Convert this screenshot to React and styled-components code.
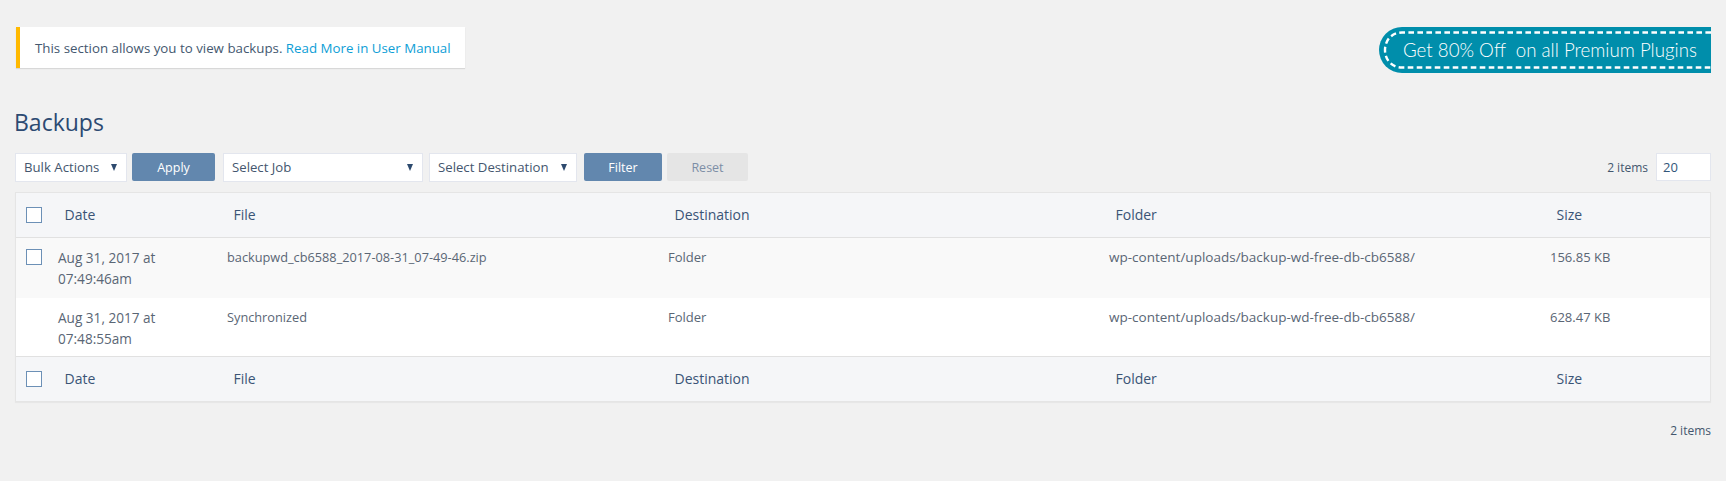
import React from "react";
import styled, { createGlobalStyle } from "styled-components";

const GlobalStyle = createGlobalStyle`
  html, body {
    margin: 0;
    background: #f1f1f1;
    font-family: "Open Sans", "Liberation Sans", sans-serif;
    font-size: 13px;
    color: #32496b;
  }
`;

const Page = styled.div`
  padding: 27px 15px 0;
  box-sizing: border-box;
  height: 481px;
  overflow: hidden;
`;

const TopRow = styled.div`
  display: flex;
  justify-content: space-between;
  align-items: flex-start;
`;

const Notice = styled.div`
  margin-left: 1px;
  box-sizing: border-box;
  width: 449px;
  height: 41px;
  padding: 0 0 0 15px;
  display: flex;
  align-items: center;
  white-space: pre;
  background: #fff;
  border-left: 4px solid #ffb900;
  box-shadow: 0 1px 1px rgba(0, 0, 0, 0.1);
  color: #44586f;
  font-size: 13.3px;
`;

const NoticeLink = styled.a`
  color: #0d9ed6;
  text-decoration: none;
`;

const Banner = styled.div`
  position: relative;
  box-sizing: border-box;
  width: 332px;
  height: 46px;
  padding-left: 24px;
  display: flex;
  align-items: center;
  background: #008eab;
  border-radius: 23px 0 0 23px;
  color: #fff;
  font-family: Lato, sans-serif;
  font-weight: 300;
  font-size: 18.7px;
  white-space: pre;
`;

const BannerDashes = styled.svg`
  position: absolute;
  left: 0;
  top: 0;
`;

const Title = styled.h1`
  margin: 33px 0 0 -1px;
  font-size: 23px;
  font-weight: 400;
  line-height: 32px;
  color: #2c4a72;
`;

const Toolbar = styled.div`
  margin-top: 14px;
  height: 30px;
  display: flex;
  align-items: center;
  justify-content: space-between;
`;

const Group = styled.div`
  display: flex;
  align-items: center;
`;

const SelectBox = styled.div`
  position: relative;
  box-sizing: border-box;
  width: ${(p) => p.$width}px;
  margin-right: ${(p) => p.$gap}px;
  height: 29px;
  &::after {
    content: "";
    position: absolute;
    right: 10px;
    top: 11px;
    border-left: 3.5px solid transparent;
    border-right: 3.5px solid transparent;
    border-top: 7px solid #2d4a6e;
  }
`;

const Select = styled.select`
  appearance: none;
  box-sizing: border-box;
  width: 100%;
  height: 100%;
  padding: 0 0 0 8px;
  background: #fff;
  border: 1px solid #e3e6ee;
  border-radius: 0;
  font-family: inherit;
  font-size: 13.2px;
  color: #44566e;
`;

const Button = styled.button`
  box-sizing: border-box;
  width: ${(p) => p.$width}px;
  margin-right: ${(p) => p.$gap}px;
  height: 28px;
  border: 0;
  border-radius: 2px;
  background: ${(p) => (p.$muted ? "#e5e5e5" : "#6287ae")};
  color: ${(p) => (p.$muted ? "#7d8ea6" : "#fff")};
  font-family: inherit;
  font-size: 12.5px;
  font-weight: 400;
`;

const ItemCount = styled.span`
  font-size: 12px;
  color: #44566e;
`;

const PerPage = styled.input`
  box-sizing: border-box;
  width: 55px;
  height: 28px;
  margin-left: 8px;
  padding: 0 0 0 6px;
  background: #fff;
  border: 1px solid #e3e6ee;
  font-family: inherit;
  font-size: 13px;
  color: #32567a;
`;

const Table = styled.table`
  margin-top: 9.5px;
  width: 100%;
  table-layout: fixed;
  border-collapse: separate;
  border-spacing: 0;
  border: 1px solid #e5e5e5;
  box-shadow: 0 1px 1px rgba(0, 0, 0, 0.04);
  background: #fff;
`;

const HeadCell = styled.th`
  height: 44px;
  padding: 0 0 0 ${(p) => (p.$check ? 10 : 14.5)}px;
  background: #f5f6f8;
  font-size: 14px;
  font-weight: 400;
  text-align: left;
  color: #3a5476;
  border-bottom: ${(p) => (p.$top ? "1px solid #e1e1e1" : "0")};
  border-top: ${(p) => (p.$top ? "0" : "1px solid #e1e1e1")};
`;

const Row = styled.tr`
  height: ${(p) => (p.$alt ? 60 : 58)}px;
  background: ${(p) => (p.$alt ? "#f9f9f9" : "#fff")};
`;

const Cell = styled.td`
  padding: 9px 8px 0;
  vertical-align: top;
  font-size: ${(p) => p.$size || 13}px;
  line-height: 21px;
  color: #5a6675;
`;

const CheckCell = styled.td`
  padding: 11px 0 0 10px;
  vertical-align: top;
`;

const CheckBox = styled.span`
  display: block;
  box-sizing: border-box;
  width: 16px;
  height: 16px;
  background: #fff;
  border: 1px solid #6c90b6;
`;

const BottomCount = styled.div`
  margin-top: 20px;
  text-align: right;
  font-size: 12px;
  color: #44566e;
`;

const columns = ["Date", "File", "Destination", "Folder", "Size"];
const widths = [34, 169, 441, 441, 441, 168];

const backups = [
  {
    date: "Aug 31, 2017 at",
    time: "07:49:46am",
    file: "backupwd_cb6588_2017-08-31_07-49-46.zip",
    size: "156.85 KB",
    selectable: true,
  },
  {
    date: "Aug 31, 2017 at",
    time: "07:48:55am",
    file: "Synchronized",
    size: "628.47 KB",
  },
];

const HeaderCells = ({ top }) => (
  <tr>
    <HeadCell $check $top={top}>
      <CheckBox />
    </HeadCell>
    {columns.map((name) => (
      <HeadCell key={name} $top={top}>
        {name}
      </HeadCell>
    ))}
  </tr>
);

const App = () => {
  return (
    <Page>
      <GlobalStyle />
      <TopRow>
        <Notice>
          This section allows you to view backups.{" "}
          <NoticeLink href="#">Read More in User Manual</NoticeLink>
        </Notice>
        <Banner>
          <BannerDashes width="332" height="46" viewBox="0 0 332 46" fill="none">
            <path
              d="M332 5.5H23C13 5.5 6 13 6 23s7 17.5 17 17.5H332"
              stroke="#fff"
              strokeWidth="2.4"
              strokeDasharray="5.6 3.4"
            />
          </BannerDashes>
          Get 80% Off  on all Premium Plugins
        </Banner>
      </TopRow>
      <Title>Backups</Title>
      <Toolbar>
        <Group>
          <SelectBox $width={112} $gap={5}>
            <Select defaultValue="bulk">
              <option value="bulk">Bulk Actions</option>
            </Select>
          </SelectBox>
          <Button $width={83} $gap={8}>
            Apply
          </Button>
          <SelectBox $width={200} $gap={6}>
            <Select defaultValue="job">
              <option value="job">Select Job</option>
            </Select>
          </SelectBox>
          <SelectBox $width={148} $gap={7}>
            <Select defaultValue="destination">
              <option value="destination">Select Destination</option>
            </Select>
          </SelectBox>
          <Button $width={78} $gap={5}>
            Filter
          </Button>
          <Button $width={81} $gap={0} $muted>
            Reset
          </Button>
        </Group>
        <Group>
          <ItemCount>2 items</ItemCount>
          <PerPage defaultValue="20" />
        </Group>
      </Toolbar>
      <Table>
        <colgroup>
          {widths.map((width, i) => (
            <col key={i} width={width} />
          ))}
        </colgroup>
        <thead>
          <HeaderCells top />
        </thead>
        <tbody>
          {backups.map((backup) => (
            <Row key={backup.time} $alt={backup.selectable}>
              <CheckCell>{backup.selectable && <CheckBox />}</CheckCell>
              <Cell $size={13.6}>
                {backup.date}
                <br />
                {backup.time}
              </Cell>
              <Cell $size={12.75}>{backup.file}</Cell>
              <Cell>Folder</Cell>
              <Cell $size={13.5}>wp-content/uploads/backup-wd-free-db-cb6588/</Cell>
              <Cell>{backup.size}</Cell>
            </Row>
          ))}
        </tbody>
        <tfoot>
          <HeaderCells />
        </tfoot>
      </Table>
      <BottomCount>2 items</BottomCount>
    </Page>
  );
};

export default App;
